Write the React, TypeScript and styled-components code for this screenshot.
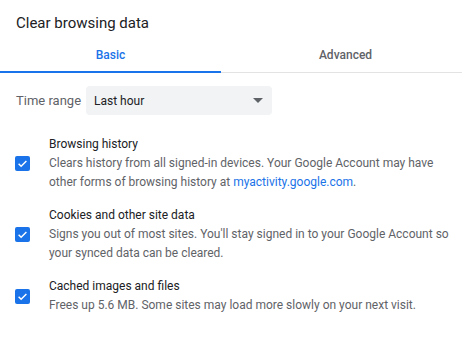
import { FC } from 'react';
import styled, { createGlobalStyle } from 'styled-components';

const GlobalStyle = createGlobalStyle`
  html, body {
    margin: 0;
    padding: 0;
    background: #fff;
    overflow: hidden;
  }
  body {
    font-family: Roboto, 'Liberation Sans', Arial, sans-serif;
    -webkit-font-smoothing: antialiased;
  }
`;

const Dialog = styled.div`
  width: 470px;
  height: 339px;
  background: #fff;
  box-sizing: border-box;
`;

const Title = styled.h1`
  margin: 0;
  padding: 13px 16px 0;
  font-size: 15px;
  line-height: 20px;
  font-weight: 400;
  color: #202124;
`;

const TabBar = styled.div`
  display: flex;
  margin-top: 3px;
  border-bottom: 1px solid #e3e3e3;
`;

const Tab = styled.div<{ $active?: boolean; $width: number }>`
  width: ${(p) => p.$width}px;
  height: 37px;
  display: flex;
  align-items: center;
  justify-content: center;
  font-size: 12px;
  font-weight: 500;
  color: ${(p) => (p.$active ? '#1a73e8' : '#5f6368')};
  box-shadow: ${(p) => (p.$active ? 'inset 0 -2px 0 #1a73e8' : 'none')};
  margin-bottom: -1px;
`;

const RangeRow = styled.div`
  display: flex;
  align-items: center;
  padding: 13px 0 0 16px;
`;

const RangeLabel = styled.span`
  width: 70px;
  font-size: 13px;
  color: #5f6368;
`;

const Select = styled.div`
  width: 186px;
  height: 29px;
  box-sizing: border-box;
  background: #f1f3f4;
  border-radius: 4px;
  display: flex;
  align-items: center;
  justify-content: space-between;
  padding: 0 9px 0 8px;
  font-size: 12px;
  color: #202124;
`;

const Arrow = styled.span`
  width: 0;
  height: 0;
  border-left: 5px solid transparent;
  border-right: 5px solid transparent;
  border-top: 5px solid #5f6368;
`;

const List = styled.div`
  display: flex;
  flex-direction: column;
  gap: 14px;
  padding: 20px 0 0 15px;
`;

const Row = styled.div`
  display: flex;
  align-items: center;
  gap: 19px;
`;

const Box = styled.span`
  flex: none;
  width: 15px;
  height: 15px;
  border-radius: 2px;
  background: #1a73e8;
  display: flex;
  align-items: center;
  justify-content: center;
`;

const Texts = styled.div`
  font-size: 12px;
  line-height: 19px;
`;

const Label = styled.div`
  color: #202124;
`;

const Desc = styled.div`
  color: #5f6368;
`;

const Link = styled.a`
  color: #1a73e8;
  text-decoration: none;
`;

const Check: FC = () => (
  <Box>
    <svg width="11" height="11" viewBox="0 0 24 24">
      <path d="M3.5 12.5l5.5 5.5L20.5 6.5" fill="none" stroke="#fff" strokeWidth="3.2" />
    </svg>
  </Box>
);

const App: FC = () => {
  return (
    <Dialog>
      <GlobalStyle />
      <Title>Clear browsing data</Title>
      <TabBar>
        <Tab $active $width={221}>Basic</Tab>
        <Tab $width={249}>Advanced</Tab>
      </TabBar>
      <RangeRow>
        <RangeLabel>Time range</RangeLabel>
        <Select>
          Last hour
          <Arrow />
        </Select>
      </RangeRow>
      <List>
        <Row>
          <Check />
          <Texts>
            <Label>Browsing history</Label>
            <Desc>
              Clears history from all signed-in devices. Your Google Account may have
              <br />
              other forms of browsing history at <Link>myactivity.google.com</Link>.
            </Desc>
          </Texts>
        </Row>
        <Row>
          <Check />
          <Texts>
            <Label>Cookies and other site data</Label>
            <Desc>
              Signs you out of most sites. You'll stay signed in to your Google Account so
              <br />
              your synced data can be cleared.
            </Desc>
          </Texts>
        </Row>
        <Row>
          <Check />
          <Texts>
            <Label>Cached images and files</Label>
            <Desc>Frees up 5.6 MB. Some sites may load more slowly on your next visit.</Desc>
          </Texts>
        </Row>
      </List>
    </Dialog>
  );
};

export default App;
